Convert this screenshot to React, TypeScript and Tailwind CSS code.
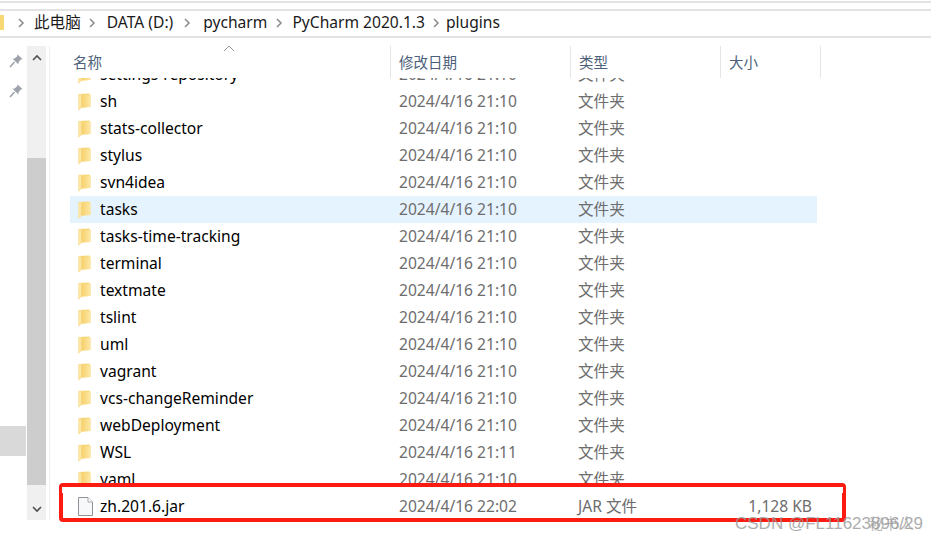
import React from "react";

const font = { fontFamily: '"Noto Sans", "Noto Sans CJK SC", sans-serif' };

const Folder = () => (
  <svg width="13" height="18" viewBox="0 0 13 18" className="shrink-0">
    <defs>
      <linearGradient id="fg" x1="0" y1="0" x2="1" y2="0">
        <stop offset="0" stopColor="#f6d06a" />
        <stop offset="1" stopColor="#fde8a8" />
      </linearGradient>
    </defs>
    <path d="M0.5 1 L11 0.5 L12.5 2 L12.5 14 L4 14.5 L0.5 17.5 Z" fill="#f7d677" />
    <path d="M0.5 1.5 L3.5 1.5 L3.5 14.5 L0.5 17.5 Z" fill="#fbe6a6" />
    <path d="M3.5 2 L12.5 1.5 L12.5 14 L3.5 14.5 Z" fill="url(#fg)" />
  </svg>
);

const FileIcon = () => (
  <svg width="15" height="19" viewBox="0 0 15 19" className="shrink-0">
    <path d="M0.5 0.5 H10 L14.5 5 V18.5 H0.5 Z" fill="#f7f8fa" stroke="#8f9296" />
    <path d="M10 0.5 V5 H14.5" fill="#fff" stroke="#a5a8ac" />
  </svg>
);

const Chev = () => (
  <svg width="8" height="10" viewBox="0 0 8 10" className="shrink-0">
    <path d="M2 1 L6 5 L2 9" fill="none" stroke="#8a8a8a" strokeWidth="1.5" />
  </svg>
);

const Pin = () => (
  <svg width="14" height="14" viewBox="0 0 14 14">
    <path d="M8.5 0.5 L13.5 5 L11.5 5.8 L9.5 8.5 L9.5 10.5 L3.5 4.8 L5.5 4.5 L8 2.5 Z" fill="#9ea3ab" />
    <path d="M5.5 8 L1 13" fill="none" stroke="#9ea3ab" strokeWidth="1.6" />
  </svg>
);

const names = ["sh", "stats-collector", "stylus", "svn4idea", "tasks", "tasks-time-tracking", "terminal", "textmate", "tslint", "uml", "vagrant", "vcs-changeReminder", "webDeployment", "WSL"];

function Row({ name, date, type, size, sel, file }: { name: string; date: string; type: string; size?: string; sel?: boolean; file?: boolean }) {
  return (
    <div className={"flex items-center h-[27px] w-[747px] shrink-0 text-[15.6px] " + (sel ? "bg-[#cce8ff80]" : "")}>
      <div className="w-[30px] flex pl-[8px] shrink-0">{file ? <FileIcon /> : <Folder />}</div>
      <div className="w-[299px] text-[#000000] shrink-0 whitespace-nowrap">{name}</div>
      <div className="w-[179px] text-[#6d6d6d] shrink-0 whitespace-nowrap">{date}</div>
      <div className="w-[100px] text-[#6d6d6d] shrink-0 whitespace-nowrap">{type}</div>
      <div className="w-[134px] text-right text-[#6d6d6d] shrink-0 whitespace-nowrap">{size}</div>
    </div>
  );
}

export default function App() {
  return (
    <div style={font} className="relative w-[931px] h-[540px] overflow-hidden bg-white flex flex-col">
      <div className="h-[2px] mt-[1px] bg-[#e3e3e3] shrink-0" />
      <div className="h-[29px] mt-[6px] pb-[2px] flex items-center border-y-2 border-[#e3e3e3] text-[15.6px] text-[#1a1a1a] shrink-0">
        <div className="w-[4px] h-[15px] bg-[#f8d775] mr-[13px]" />
        <Chev />
        <span className="ml-[9px]">此电脑</span>
        <span className="ml-[7px] mr-[11px]"><Chev /></span>
        <span>DATA (D:)</span>
        <span className="ml-[10px] mr-[12px]"><Chev /></span>
        <span>pycharm</span>
        <span className="ml-[8px] mr-[9px]"><Chev /></span>
        <span>PyCharm 2020.1.3</span>
        <span className="ml-[7px] mr-[6px]"><Chev /></span>
        <span>plugins</span>
      </div>
      <div className="flex h-[474px] mt-[8px] shrink-0">
        <div className="w-[27px] shrink-0 flex flex-col">
          <div className="mt-[8px] pl-[9px] flex"><Pin /></div>
          <div className="mt-[16px] pl-[9px] flex"><Pin /></div>
          <div className="mt-[328px] w-[26px] h-[30px] bg-[#d9d9d9]" />
        </div>
        <div className="w-[19px] shrink-0 bg-[#f0f0f0] flex flex-col">
          <div className="h-[22px] flex items-center justify-center">
            <svg width="10" height="7" viewBox="0 0 10 7"><path d="M1 6 L5 2 L9 6" fill="none" stroke="#505050" strokeWidth="1.6" /></svg>
          </div>
          <div className="h-[90px]" />
          <div className="h-[327px] bg-[#cdcdcd]" />
          <div className="flex-1 flex items-center justify-center pt-[13px]">
            <svg width="10" height="7" viewBox="0 0 10 7"><path d="M1 1 L5 5 L9 1" fill="none" stroke="#505050" strokeWidth="1.6" /></svg>
          </div>
        </div>
        <div className="w-[4px] border-r border-[#eeeeee] shrink-0" />
        <div className="flex-1 flex flex-col min-w-0 pl-[20px]">
          <div className="flex h-[32px] shrink-0 text-[14.5px] text-[#4c607a] -ml-[20px] relative">
            <div className="w-[341px] pl-[23px] pt-[6px] border-r border-[#e5e5e5]">名称</div>
            <div className="w-[180px] pl-[8px] pt-[6px] border-r border-[#e5e5e5]">修改日期</div>
            <div className="w-[150px] pl-[8px] pt-[6px] border-r border-[#e5e5e5]">类型</div>
            <div className="w-[100px] pl-[8px] pt-[6px] border-r border-[#e5e5e5]">大小</div>
            <svg width="12" height="7" viewBox="0 0 12 7" className="absolute left-[173px] top-[-1px]"><path d="M1 6 L6 1 L11 6" fill="none" stroke="#9a9a9a" strokeWidth="1" /></svg>
          </div>
          <div className="h-[10px] shrink-0 overflow-hidden">
            <div className="-mt-[17px]"><Row name="settings-repository" date="2024/4/16 21:10" type="文件夹" /></div>
          </div>
          {names.map((n) => (
            <Row key={n} name={n} date={n === "WSL" ? "2024/4/16 21:11" : "2024/4/16 21:10"} type="文件夹" sel={n === "tasks"} />
          ))}
          <Row name="yaml" date="2024/4/16 21:10" type="文件夹" />
          <Row name="zh.201.6.jar" date="2024/4/16 22:02" type="JAR 文件" size="1,128 KB" file />
        </div>
      </div>
      <div className="absolute left-[59px] top-[483px] w-[787px] h-[39px] border-[4px] border-[#fb1b10] rounded-[4px]" />
      <div className="absolute left-[62px] top-[487px] w-[781px] h-[6px] bg-white" />
      <div className="absolute left-[735px] top-[514px] text-[17px] leading-[20px] text-[#9a9a9a] opacity-80 whitespace-nowrap" style={{ fontFamily: '"Liberation Sans", "Noto Sans CJK SC", sans-serif' }}>CSDN @FL11623896/29</div>
      <div className="absolute left-[869px] top-[513px] text-[15px] leading-[20px] text-[#9a9a9a] opacity-70 whitespace-nowrap" style={{ fontFamily: '"Noto Sans CJK SC", sans-serif' }}>秘书人</div>
    </div>
  );
}
